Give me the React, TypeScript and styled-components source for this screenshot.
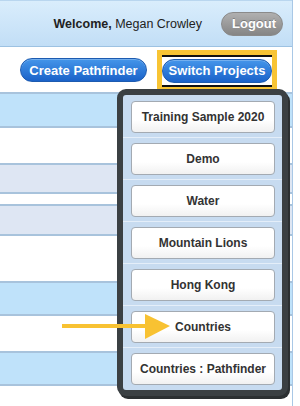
import * as React from "react";
import styled, { createGlobalStyle } from "styled-components";

const GlobalStyle = createGlobalStyle`
  html, body {
    margin: 0;
    padding: 0;
    background: #fff;
    font-family: "Liberation Sans", Arial, Helvetica, sans-serif;
  }
`;

type Tone = "blue" | "grey" | "white";

interface RowSpec {
  height: number;
  tone: Tone;
}

const rows: RowSpec[] = [
  { height: 36, tone: "blue" },
  { height: 35, tone: "white" },
  { height: 31, tone: "grey" },
  { height: 10, tone: "white" },
  { height: 32, tone: "grey" },
  { height: 11, tone: "white" },
  { height: 34, tone: "white" },
  { height: 35, tone: "blue" },
  { height: 35, tone: "white" },
  { height: 35, tone: "blue" },
  { height: 20, tone: "white" },
];

const projects = [
  "Training Sample 2020",
  "Demo",
  "Water",
  "Mountain Lions",
  "Hong Kong",
  "Countries",
  "Countries : Pathfinder",
];

const Page = styled.div`
  position: relative;
  width: 292px;
  height: 406px;
  border-right: 1px solid #a9c8e6;
  overflow: hidden;
`;

const Header = styled.div`
  height: 47px;
  box-sizing: border-box;
  display: flex;
  align-items: center;
  justify-content: flex-end;
  gap: 19px;
  padding-right: 9px;
  background: linear-gradient(#d9edfc, #c2def6);
  border-bottom: 1px solid #9dc2e2;
  border-top: 1px solid #b9d6ef;
`;

const Welcome = styled.div`
  font-size: 12.5px;
  color: #222;

  b {
    font-weight: bold;
  }
`;

const Pill = styled.button`
  height: 24px;
  border-radius: 12px;
  padding: 0 10px;
  font-family: inherit;
  font-weight: bold;
  font-size: 13px;
  color: #fff;
  cursor: pointer;
`;

const LogoutButton = styled(Pill)`
  width: 62px;
  background: linear-gradient(#b0b0b0, #858585);
  border: 1px solid #8a8a8a;
  text-shadow: 0 -1px 0 rgba(0, 0, 0, 0.25);
`;

const Toolbar = styled.div`
  height: 45px;
  display: flex;
  align-items: center;
  gap: 15px;
  padding-left: 20px;
  padding-top: 1px;
  box-sizing: border-box;
`;

const BlueButton = styled(Pill)<{ $width: number }>`
  width: ${(p) => p.$width}px;
  background: linear-gradient(#4596ea, #1a62c9);
  border: 1px solid #1d5bb0;
  box-shadow: inset 0 1px 0 rgba(255, 255, 255, 0.25);
  padding: 0;
`;

const Highlight = styled.div`
  position: relative;
  padding: 2px 0;
  outline: 5px solid #f8c434;
  border-top: 2px solid #111;
  border-bottom: 2px solid #111;
  margin-top: 1px;
`;

const Table = styled.div`
  display: flex;
  flex-direction: column;
`;

const Row = styled.div<{ $tone: Tone }>`
  box-sizing: border-box;
  background: ${(p) =>
    p.$tone === "blue" ? "#bfe2fa" : p.$tone === "grey" ? "#dee6f3" : "#fff"};
  border-top: ${(p) => (p.$tone === "white" ? "none" : "2px solid #a8c3dc")};
  border-bottom: ${(p) => (p.$tone === "white" ? "none" : "2px solid #a8c3dc")};
`;

const Menu = styled.div`
  position: absolute;
  left: 117px;
  top: 89px;
  width: 171px;
  box-sizing: border-box;
  border: 6px solid #3b4043;
  border-radius: 9px;
  box-shadow: 2px 3px 0 #2c3032;
  background: #c7dbf0;
  padding: 1px 0 1px;
`;

const MenuItem = styled.div`
  padding: 5px 7px 4px 8px;
  border-bottom: 1px solid #e4eef9;

  &:last-child {
    border-bottom: none;
  }
`;

const ProjectCard = styled.div`
  height: 32px;
  box-sizing: border-box;
  display: flex;
  align-items: center;
  justify-content: center;
  background: linear-gradient(#ffffff 60%, #f1f1f1);
  border: 1px solid #a3aab2;
  border-radius: 4px;
  font-size: 12px;
  font-weight: bold;
  color: #333;
  white-space: nowrap;
`;

const ArrowMark = styled.svg`
  position: absolute;
  left: 60px;
  top: 312px;
`;

const App = () => (
  <>
    <GlobalStyle />
    <Page>
      <Header>
        <Welcome>
          <b>Welcome,</b> Megan Crowley
        </Welcome>
        <LogoutButton>Logout</LogoutButton>
      </Header>
      <Toolbar>
        <BlueButton $width={127}>Create Pathfinder</BlueButton>
        <Highlight>
          <BlueButton $width={110}>Switch Projects</BlueButton>
        </Highlight>
      </Toolbar>
      <Table>
        {rows.map((r, i) => (
          <Row key={i} $tone={r.tone} style={{ height: r.height }} />
        ))}
      </Table>
      <Menu>
        {projects.map((name) => (
          <MenuItem key={name}>
            <ProjectCard>{name}</ProjectCard>
          </MenuItem>
        ))}
      </Menu>
      <ArrowMark width="112" height="30" viewBox="0 0 112 30">
        <rect x="2" y="12" width="84" height="4" fill="#f8c232" />
        <polygon points="85,2 110,14 85,27" fill="#f8c232" />
      </ArrowMark>
    </Page>
  </>
);

export default App;
